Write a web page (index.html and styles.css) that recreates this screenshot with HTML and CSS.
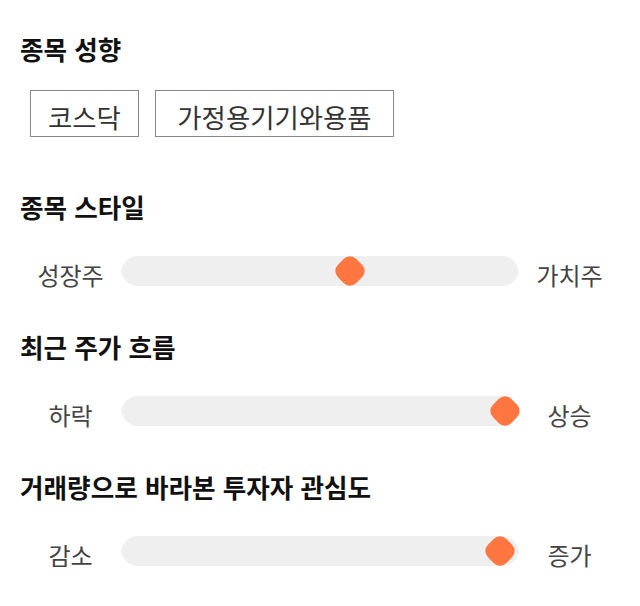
FILE: index.html
```html
<!DOCTYPE html>
<html lang="ko">
<head>
<meta charset="utf-8">
<link rel="stylesheet" href="styles.css">
</head>
<body>
<main class="page">
  <section class="sec sec-chips">
    <h2 class="title">종목 성향</h2>
    <div class="chips">
      <span class="chip">코스닥</span>
      <span class="chip chip-wide">가정용기기와용품</span>
    </div>
  </section>

  <section class="sec">
    <h2 class="title">종목 스타일</h2>
    <div class="row">
      <span class="lbl">성장주</span>
      <div class="track">
        <svg class="track-bg" width="398" height="30" viewBox="0 0 398 30"><path d="M16 0H382C391 0 397 9 398 15C397 21 391 30 382 30H16C7 30 1 21 0 15C1 9 7 0 16 0Z" fill="#efefef"/></svg>
        <span class="thumb" style="--v:0.581"></span>
      </div>
      <span class="lbl lbl-r">가치주</span>
    </div>
  </section>

  <section class="sec">
    <h2 class="title">최근 주가 흐름</h2>
    <div class="row">
      <span class="lbl">하락</span>
      <div class="track">
        <svg class="track-bg" width="398" height="30" viewBox="0 0 398 30"><path d="M16 0H382C391 0 397 9 398 15C397 21 391 30 382 30H16C7 30 1 21 0 15C1 9 7 0 16 0Z" fill="#efefef"/></svg>
        <span class="thumb" style="--v:1"></span>
      </div>
      <span class="lbl lbl-r">상승</span>
    </div>
  </section>

  <section class="sec">
    <h2 class="title">거래량으로 바라본 투자자 관심도</h2>
    <div class="row">
      <span class="lbl">감소</span>
      <div class="track">
        <svg class="track-bg" width="398" height="30" viewBox="0 0 398 30"><path d="M16 0H382C391 0 397 9 398 15C397 21 391 30 382 30H16C7 30 1 21 0 15C1 9 7 0 16 0Z" fill="#efefef"/></svg>
        <span class="thumb" style="--v:0.988"></span>
      </div>
      <span class="lbl lbl-r">증가</span>
    </div>
  </section>
</main>
</body>
</html>
```

FILE: styles.css
```css
html, body {
  margin: 0;
  padding: 0;
  background: #ffffff;
}
body {
  font-family: "Noto Sans CJK KR", "Noto Sans", sans-serif;
  color: #111111;
}
.page {
  padding: 32px 20px 0 20px;
}
.sec {
  margin-bottom: 44px;
}
.sec-chips {
  margin-bottom: 53px;
}
.title {
  margin: 0;
  font-size: 25.6px;
  line-height: 34px;
  font-weight: 700;
  color: #111111;
}
.chips {
  display: flex;
  gap: 16px;
  margin: 24px 0 0 10px;
}
.chip {
  display: block;
  border: 1px solid #888888;
  padding: 8px 17px 2px 17px;
  font-size: 26.4px;
  line-height: 35px;
  color: #333333;
}
.chip-wide {
  padding: 8px 21.5px 2px 21.5px;
}
.row {
  display: flex;
  align-items: center;
  margin-top: 32px;
  height: 30px;
}
.lbl {
  width: 101px;
  flex: none;
  text-align: center;
  font-size: 24px;
  line-height: 30px;
  padding-top: 8px;
  color: #444444;
  white-space: nowrap;
}
.track {
  position: relative;
  flex: 1;
  height: 30px;
}
.track-bg {
  display: block;
}
.thumb {
  position: absolute;
  top: 15px;
  left: calc(14.5px + var(--v) * (100% - 29px));
  width: 26px;
  height: 26px;
  background: #ff7640;
  border-radius: 9px;
  transform: translate(-50%, -50%) rotate(45deg);
}
```
